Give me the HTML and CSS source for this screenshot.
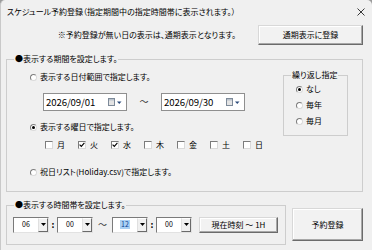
FILE: index.html
```html
<!DOCTYPE html>
<html lang="ja">
<head>
<meta charset="utf-8">
<title>スケジュール予約登録</title>
<link rel="stylesheet" href="styles.css">
</head>
<body>
<div class="window">
  <div class="titlebar">
    <span class="title">スケジュール予約登録（指定期間中の指定時間帯に表示されます。）</span>
    <svg class="close" width="8" height="8" viewBox="0 0 8 8"><path d="M0.5 0.5L7.5 7.5M7.5 0.5L0.5 7.5" stroke="#222" stroke-width="0.9" fill="none"/></svg>
  </div>
  <div class="topbar">
    <span class="note">※予約登録が無い日の表示は、通期表示となります。</span>
    <button class="btn btn-wide">通期表示に登録</button>
  </div>
  <fieldset class="group g1">
    <legend>●表示する期間を設定します。</legend>
    <div class="g1-body">
      <div class="options">
        <div class="radio-row"><span class="radio"></span><span>表示する日付範囲で指定します。</span></div>
        <div class="date-row">
          <div class="datepicker"><span class="date">2026/09/01</span><svg class="cal" width="15" height="9" viewBox="0 0 15 9"><rect x="0.5" y="0.5" width="6" height="7" fill="#e4e4e4" stroke="#7d8a99"/><rect x="1" y="1" width="5" height="1.5" fill="#b9c2cc"/><path d="M9 3.5h4.5l-2.25 2.5z" fill="#2b4a7a"/></svg></div>
          <span class="tilde">～</span>
          <div class="datepicker"><span class="date">2026/09/30</span><svg class="cal" width="15" height="9" viewBox="0 0 15 9"><rect x="0.5" y="0.5" width="6" height="7" fill="#e4e4e4" stroke="#7d8a99"/><rect x="1" y="1" width="5" height="1.5" fill="#b9c2cc"/><path d="M9 3.5h4.5l-2.25 2.5z" fill="#2b4a7a"/></svg></div>
        </div>
        <div class="radio-row r2"><span class="radio checked"></span><span>表示する曜日で指定します。</span></div>
        <div class="days">
          <span class="day"><span class="check"></span>月</span>
          <span class="day"><span class="check checked"><svg width="6" height="6" viewBox="0 0 6 6"><path d="M0.6 2.6L2.3 4.4L5.4 0.8" stroke="#000" stroke-width="1.1" fill="none"/></svg></span>火</span>
          <span class="day"><span class="check checked"><svg width="6" height="6" viewBox="0 0 6 6"><path d="M0.6 2.6L2.3 4.4L5.4 0.8" stroke="#000" stroke-width="1.1" fill="none"/></svg></span>水</span>
          <span class="day"><span class="check"></span>木</span>
          <span class="day"><span class="check"></span>金</span>
          <span class="day"><span class="check"></span>土</span>
          <span class="day"><span class="check"></span>日</span>
        </div>
        <div class="radio-row r3"><span class="radio"></span><span>祝日リスト(Holiday.csv)で指定します。</span></div>
      </div>
      <fieldset class="group repeat">
        <legend>繰り返し指定</legend>
        <div class="repeat-list">
          <div class="radio-row"><span class="radio checked"></span><span>なし</span></div>
          <div class="radio-row"><span class="radio"></span><span>毎年</span></div>
          <div class="radio-row"><span class="radio"></span><span>毎月</span></div>
        </div>
      </fieldset>
    </div>
  </fieldset>
  <div class="bottom">
    <fieldset class="group g2">
      <legend>●表示する時間帯を設定します。</legend>
      <div class="time-row">
        <div class="combo"><span class="val">06</span><span class="drop"><svg width="5" height="3" viewBox="0 0 5 3"><path d="M0 0h5L2.5 3z" fill="#000"/></svg></span></div>
        <span class="colon">:</span>
        <div class="combo"><span class="val">00</span><span class="drop"><svg width="5" height="3" viewBox="0 0 5 3"><path d="M0 0h5L2.5 3z" fill="#000"/></svg></span></div>
        <span class="wave">～</span>
        <div class="combo"><span class="val"><span class="sel">12</span></span><span class="drop"><svg width="5" height="3" viewBox="0 0 5 3"><path d="M0 0h5L2.5 3z" fill="#000"/></svg></span></div>
        <span class="colon">:</span>
        <div class="combo"><span class="val">00</span><span class="drop"><svg width="5" height="3" viewBox="0 0 5 3"><path d="M0 0h5L2.5 3z" fill="#000"/></svg></span></div>
        <button class="btn btn-now">現在時刻 ～ 1H</button>
      </div>
    </fieldset>
    <button class="btn btn-reserve">予約登録</button>
  </div>
</div>
</body>
</html>
```

FILE: styles.css
```css
* { box-sizing: border-box; }
html, body { margin: 0; padding: 0; }
body {
  width: 372px;
  height: 250px;
  overflow: hidden;
  background: #9c9c9c;
  font-family: "Noto Sans CJK JP", "Noto Sans", sans-serif;
  font-size: 8px;
  line-height: 12px;
  color: #000;
  font-feature-settings: "palt";
}
.window {
  width: 372px;
  height: 250px;
  background: #f0f0f0;
  border-top-left-radius: 5px;
  border-top-right-radius: 5px;
  border-left: 1px solid #c9c9c9;
  display: flex;
  flex-direction: column;
}
.titlebar {
  height: 23px;
  flex: none;
  display: flex;
  align-items: center;
  justify-content: space-between;
  padding: 0 7px 0 6px;
}
.title { font-size: 8px; }
.close { display: block; }
.topbar {
  height: 24px;
  flex: none;
  display: flex;
  align-items: center;
  justify-content: flex-end;
  gap: 22px;
  padding-right: 9px;
}
.btn {
  font-family: inherit;
  font-size: 8px;
  line-height: 10px;
  font-feature-settings: "palt";
  color: #000;
  background: #f2f2f2;
  border: 1px solid;
  border-color: #d8d8d8 #6b6b6b #6b6b6b #d8d8d8;
  box-shadow: inset -1px -1px 0 #a8a8a8, inset 1px 1px 0 #fff;
  padding: 0;
  margin: 0;
}
.btn-wide { width: 105px; height: 20px; }

.group {
  border: 1px solid #cdcdcd;
  margin: 0;
  padding: 0;
  min-width: 0;
}
.group > legend {
  padding: 0 1px;
  margin-left: 7px;
  line-height: 12px;
  white-space: nowrap;
}
.g1 {
  width: 357px;
  margin: 6px 0 0 5px;
  padding: 4px 0 11px 0;
}
.g1-body { display: flex; }
.options {
  flex: 1;
  padding-left: 23px;
  display: flex;
  flex-direction: column;
}
.radio-row {
  height: 16px;
  display: flex;
  align-items: center;
}
.radio {
  width: 7px;
  height: 7px;
  border-radius: 50%;
  background: #fff;
  border: 1px solid;
  border-color: #7c7c7c #dadada #dadada #7c7c7c;
  margin-right: 3px;
  display: flex;
  align-items: center;
  justify-content: center;
  flex: none;
}
.radio.checked::after {
  content: "";
  width: 3px;
  height: 3px;
  border-radius: 50%;
  background: #000;
}
.date-row {
  margin-top: 8px;
  padding-left: 13px;
  height: 18px;
  display: flex;
  align-items: center;
}
.datepicker {
  width: 84px;
  height: 18px;
  background: #fff;
  border: 1px solid #8f8f8f;
  display: flex;
  align-items: center;
  justify-content: space-between;
  padding: 0 3px 0 2px;
}
.date { font-size: 9.6px; letter-spacing: -0.1px; }
.cal { display: block; }
.tilde {
  width: 34px;
  text-align: center;
  font-size: 9px;
  color: #333;
}
.r2 { margin-top: 8px; }
.days {
  margin-top: 2px;
  height: 16px;
  padding-left: 15px;
  display: flex;
  align-items: center;
}
.day {
  width: 33px;
  flex: none;
  display: flex;
  align-items: center;
}
.check {
  width: 8px;
  height: 8px;
  background: #fff;
  border: 1px solid;
  border-color: #7c7c7c #dadada #dadada #7c7c7c;
  margin-right: 4px;
  display: flex;
  align-items: center;
  justify-content: center;
  flex: none;
}
.check svg { display: block; }
.r3 { margin-top: 11px; }

.repeat {
  width: 65px;
  height: 67px;
  flex: none;
  margin-right: 14px;
  padding: 0;
}
.repeat > legend { margin-left: 7px; }
.repeat-list { padding-left: 12px; }
.repeat-list .radio-row { height: 16px; }

.bottom {
  display: flex;
  align-items: flex-start;
  gap: 6px;
  margin-top: 7px;
  padding-left: 5px;
}
.g2 {
  width: 280px;
  height: 46px;
  padding: 5px 0 0 0;
}
.time-row {
  display: flex;
  align-items: center;
  height: 17px;
  padding-left: 6px;
}
.combo {
  width: 36px;
  height: 16px;
  background: #fff;
  border: 1px solid;
  border-color: #7a7a7a #e2e2e2 #e2e2e2 #7a7a7a;
  display: flex;
  flex: none;
}
.val {
  flex: 1;
  display: flex;
  align-items: center;
  justify-content: center;
  font-size: 7px;
  line-height: 9px;
}
.sel {
  background: #a9d0f3;
  color: #0b3f94;
  padding: 0 1px;
}
.drop {
  width: 10px;
  background: #f0f0f0;
  border: 1px solid;
  border-color: #fff #6a6a6a #6a6a6a #e0e0e0;
  display: flex;
  align-items: center;
  justify-content: center;
}
.drop svg { display: block; }
.colon {
  width: 8px;
  text-align: center;
  font-size: 9px;
  font-weight: bold;
}
.wave {
  width: 19px;
  text-align: center;
  font-size: 9px;
  color: #333;
}
.btn-now {
  width: 79px;
  height: 16px;
  margin-left: 7px;
}
.btn-reserve {
  width: 71px;
  height: 33px;
  margin-top: 9px;
}
```
